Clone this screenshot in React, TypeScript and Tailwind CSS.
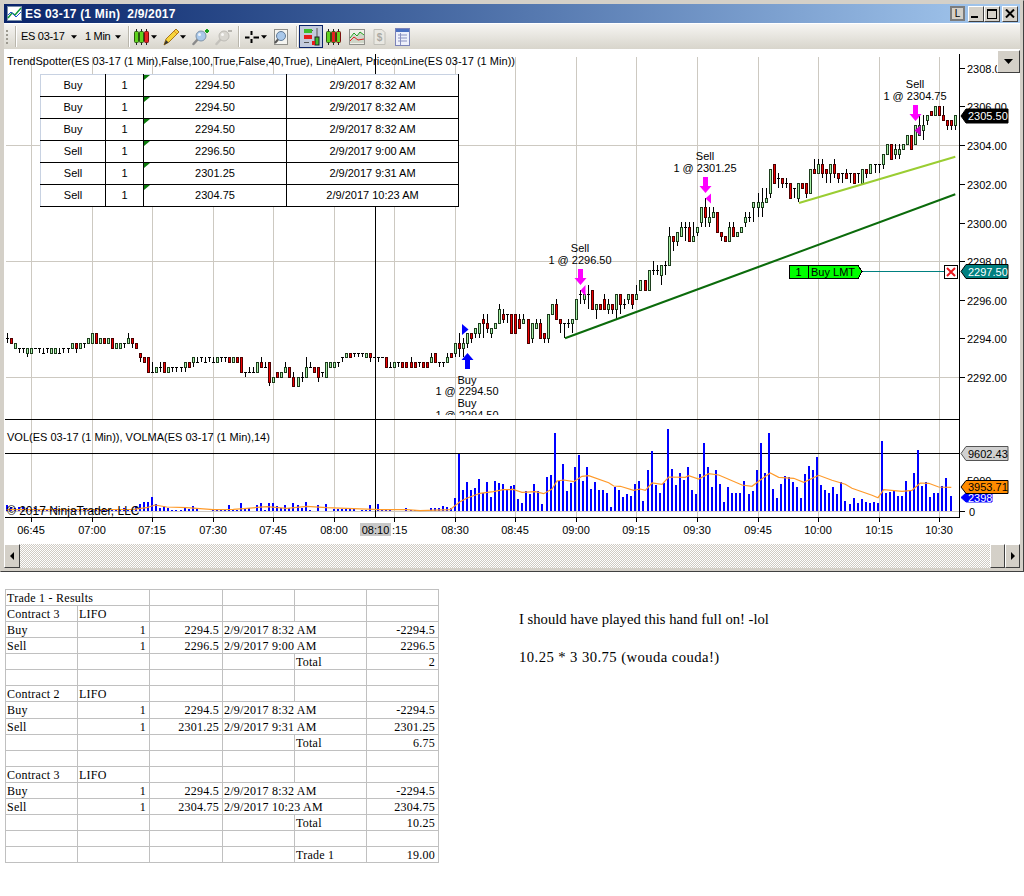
import React from "react";

const B: number[][] = [
[2,0,0,1,-1],[1,0,-1],[0,-1,-2],[2,-2,-2,-2,-3],[2,-2,-2,-2,-3],[0,-2,-3,-2,-4],[0,-2,-3],[2,-2,-2],[2,-2,-2,-2,-3],[2,-3,-3,-2],
[2,-2,-2,-2,-3],[0,-2,-3],[0,-2,-3],[2,-3,-3,-2],[2,-2,-2,-2,-3],[2,-2,-2,-2,-3],[0,-1,-2],[1,-1,-2,-1,-3],[0,-1,-2],[2,-1,-1,-1,-2],
[0,0,-1],[0,1,-1],[1,1,-1],[0,0,-1],[1,0,-1],[0,0,-1],[1,0,-2],[0,-1,-2],[0,-1,-2],[2,-1,-1,-1,-2],
[0,0,-1,1],[1,0,-1,0,-2],[1,-1,-2],[1,-3,-4,-3,-5],[1,-4,-5],[1,-4,-7],[2,-7,-7,-5],[0,-6,-7],[2,-6,-6,-5,-7],[1,-5,-7],
[0,-6,-7],[2,-6,-6,-6,-7],[2,-6,-6,-6,-7],[2,-6,-6,-6,-7],[0,-5,-6,-5,-7],[1,-5,-6],[0,-4,-5,-4,-6],[2,-5,-5,-4],[2,-4,-4,-4,-5],[2,-5,-5,-4],
[2,-4,-4,-4,-5],[2,-5,-5,-4],[0,-4,-5],[2,-4,-4,-4,-5],[2,-4,-4,-4,-5],[1,-4,-5],[0,-4,-5],[1,-4,-5],[1,-4,-7],[2,-7,-7,-7,-8],
[2,-7,-7,-6],[2,-7,-7,-6],[0,-5,-7],[1,-5,-6,-4],[2,-6,-6,-5],[1,-5,-9,-5,-10],[0,-8,-9],[1,-7,-8],[0,-7,-8],[0,-6,-7,-5],
[1,-6,-8],[1,-8,-10,-7],[0,-8,-10],[2,-8,-8,-7,-9],[0,-6,-8,-4],[2,-6,-6,-5],[1,-6,-7],[1,-6,-8,-6,-9],[2,-7,-7,-7,-8],[0,-5,-8],
[0,-5,-6],[0,-5,-6],[2,-5,-5,-5,-6],[2,-4,-4,-4,-5],[0,-3,-4],[1,-3,-4],[2,-3,-3,-3,-4],[2,-3,-3,-3,-4],[2,-3,-3,-3,-4],[0,-3,-4],
[1,-3,-4,-3,-5],[2,-4,-4],[2,-4,-4,-4,-5],[2,-4,-4],[1,-4,-6],[2,-6,-6,-5],[0,-5,-6],[2,-5,-5,-5,-6],[1,-5,-6],[1,-5,-6],
[1,-5,-6,-4],[1,-5,-6],[2,-5,-5,-5,-6],[1,-5,-6],[1,-5,-6],[0,-4,-5,-3],[1,-3,-5],[2,-5,-5,-5,-6],[2,-5,-5,-5,-6],[0,-4,-5,-3],
[1,-3,-4],[0,-1,-3,-1,-4],[1,-1,-2,1,-4],[0,-1,-2,0,-4],[0,1,-1,1,-2],[1,1,0,1,-1],[0,2,1,2,0],[0,3,1,3,0],[1,4,3,5,0],[1,3,2,5,1],
[0,2,1,2,0],[0,3,2],[0,6,3,7],[1,5,4,6,3],[2,5,5,5,3],[1,5,1],[1,5,1],[1,4,2,5],[0,4,3,5],[1,4,-1],
[0,3,0,3,-1],[0,3,2,4],[1,3,0,4],[1,1,0,1,-1],[0,5,0,5,-1],[0,7,5],[1,7,4,8],[1,4,3,4,1],[2,3,3,3,0],[2,3,3,4,2],
[0,4,3,4,1],[0,8,4],[2,9,9,10,7],[0,9,8,9,7],[2,9,9,11,6],[1,10,6],[0,7,6,7,4],[1,7,6],[1,8,6,9],[0,7,6,8,5],
[1,7,6,7,5],[0,9,6,9,4],[1,9,7,9,5],[2,7,7,8,6],[0,9,8,9,7],[1,9,7,9,6],[0,9,8,11],[0,12,10],[1,12,10],[0,14,10],
[2,14,14,16,13],[2,14,14,15,13],[0,15,13,15,11],[2,15,15,16,13],[0,21,15,23],[1,21,20,21,18],[0,22,20,22,19],[0,23,21,24],[2,23,23,24,20],[1,23,20,24],
[0,21,20,24],[0,23,22,23,21],[0,27,24,27,23],[1,27,25,29,23],[0,25,24,27,23],[0,26,25,27],[1,26,22],[1,22,21,22,20],[1,21,20],[0,23,20,24],
[1,23,21,24],[0,22,21],[0,23,22],[0,25,24,26,23],[2,25,25,26,24],[0,28,27,28,24],[0,28,27,30,25],[0,28,27,31,25],[0,29,28,31],[0,35,30,35,29],
[1,36,32],[2,33,33,34,31],[1,33,32,33,31],[2,32,32,33,31],[1,32,29],[2,31,31,31,29],[0,32,29,32,28],[1,32,31],[1,32,30,32,29],[0,35,30],
[1,35,34,37],[0,36,34,37],[1,36,34,37,33],[1,35,34,35,32],[0,36,34,36,32],[1,36,34,37,33],[1,34,33,34,32],[2,34,34,34,32],[1,34,33,35],[2,34,34,34,32],
[1,34,32],[2,34,34,34,32],[0,35,32],[1,35,34,35,33],[0,36,34],[2,36,36,36,34],[2,36,36,36,34],[0,38,36,38,35],[0,40,38],[1,40,37],
[0,39,38,40,37],[0,39,38,40,37],[0,40,39],[0,42,40],[1,42,39],[0,44,40],[0,44,42,46],[0,44,43,46,41],[0,46,45,46,44],[1,47,46],
[0,48,46],[1,48,46],[1,46,45,48],[1,45,44,45,43],[1,45,44,45,43],[0,46,44,46,43],
];

const LV = [6,4,3,4,4,3,2,3,2,2,2,2,3,2,2,1,1,2,2,3,2,2,3,2,3,2,1,2,1,3,2,2,5,7,9,9,14,7,3,5,3,1,1,1,3,2,5,3,0,0,0,1,1,1,1,6,1,1,8,3,3,0,6,8,1,8,8,5,3,6,3,8,6,3,9,1,0,6,0,7,0,2,2,2,2,2,2,0,1,1,6,0,7,2,1,1,0,0,0,3,1,1,0,0,0,3,3,3,5,4,3,13,57,21,29,21,23,32,18,29,14,30,28,27,21,25];
const RV = [210,252,264,228,236,207,228,266,186,180,54,198,147,228,204,156,120,198,156,222,201,225,225,234,276,216,225,246,237,243,207,198,258,165,108,210,234,204,42,162,210,174,195,156,225,237,177,84,156,216,165,207,261,216,234,234,234,198,237,228,165,84,174,54,222,249,207,183,186,201,216,249,177,153,165,126,210,225,234,216,237,201,258,267,249,264,252,261,264,261,264,78,234,231,228,243,243,198,228,174,105,213,201,246,234,234,213,189,243];

const MAL = [[20,284],[200,284],[400,283],[440,278],[465,270],[500,276],[560,278],[640,284],[700,283],[740,280],[800,275],[860,280],[920,274],[980,278],[1060,281],[1140,284],[1220,284],[1260,287],[1350,284],[1380,260],[1400,250],[1440,235],[1480,230],[1510,224],[1536,224]];
const MAR = [[0,222],[30,232],[70,230],[95,236],[120,222],[135,198],[155,195],[185,200],[210,184],[230,182],[290,203],[305,213],[325,214],[365,226],[385,222],[400,226],[420,204],[450,208],[470,186],[520,187],[530,182],[560,192],[590,176],[620,180],[690,210],[720,214],[745,195],[775,174],[800,187],[845,190],[875,202],[920,181],[960,196],[1000,208],[1020,220],[1080,241],[1098,248],[1115,224],[1170,229],[1200,226],[1225,204],[1250,205],[1280,216],[1318,217]];
const MA = MAL.map(([x, y]) => `${(x / 3).toFixed(1)},${(415 + y / 3).toFixed(1)}`).concat(MAR.map(([x, y]) => `${(512 + x / 3).toFixed(1)},${(415 + y / 3).toFixed(1)}`)).join(" ");

const px = (i: number) => Math.floor(7.5 + 4.035 * i);
const py = (t: number) => Math.round(338 - 4.84 * t);

const gridI = Array.from({ length: 16 }, (_, k) => 6 + 15 * k);
const times = ["06:45","07:00","07:15","07:30","07:45","08:00","","08:30","08:45","09:00","09:15","09:30","09:45","10:00","10:15","10:30"];
const prices: [string, number][] = [["2308.00",68],["2306.00",106],["2304.00",145],["2302.00",184],["2300.00",223],["2298.00",261],["2296.00",300],["2294.00",338],["2292.00",377]];
const GRID = "#cdc9c1";

function Arrow({ x, y, up, color }: { x: number; y: number; up?: boolean; color: string }) {
  const d = up
    ? `M${x},${y} l6,7 h-3.5 v9 h-5 v-9 h-3.5 z`
    : `M${x},${y + 16} l6,-7 h-3.5 v-9 h-5 v9 h-3.5 z`;
  return <path d={d} fill={color} />;
}

function Tag({ y, h = 14, x2 = 1008, fill, stroke = "#000", text, color = "#000" }: { y: number; h?: number; x2?: number; fill: string; stroke?: string; text: string; color?: string }) {
  const t = y - h / 2;
  return (
    <g>
      <polygon points={`961,${y} 966,${t} ${x2},${t} ${x2},${t + h} 966,${t + h}`} fill={fill} stroke={stroke} strokeWidth={1} />
      <text x={968} y={y + 4} fontSize={11} fill={color}>{text}</text>
    </g>
  );
}

function Chart() {
  return (
    <svg viewBox="4 49 1015 495" width={1015} height={495} className="block">
      <defs>
        <clipPath id="topclip"><rect x="4" y="49" width="955" height="366" /></clipPath>
      </defs>
      <g shapeRendering="crispEdges">
        {gridI.map((i) => (
          <g key={i}>
            <line x1={px(i) + 0.5} x2={px(i) + 0.5} y1={57} y2={517} stroke={GRID} />
            <line x1={px(i) + 0.5} x2={px(i) + 0.5} y1={517} y2={522} stroke="#000" />
          </g>
        ))}
        {[145, 261, 377].map((y) => <line key={y} x1={6} x2={959} y1={y + 0.5} y2={y + 0.5} stroke={GRID} />)}
        <line x1={6} x2={959} y1={511.5} y2={511.5} stroke={GRID} />
        <line x1={375.5} x2={375.5} y1={54} y2={517} stroke="#000" />
        <line x1={5} x2={959} y1={419.5} y2={419.5} stroke="#000" />
        <line x1={5} x2={959} y1={453.5} y2={453.5} stroke="#000" />
        <line x1={5} x2={959} y1={517.5} y2={517.5} stroke="#000" />
        <line x1={959.5} x2={959.5} y1={54} y2={518} stroke="#000" />
        {prices.map(([, y]) => <line key={y} x1={960} x2={965} y1={y + 0.5} y2={y + 0.5} stroke="#000" />)}
        <line x1={960} x2={965} y1={511.5} y2={511.5} stroke="#000" />

        {LV.map((h, i) => h > 0 && <rect key={i} x={px(i) - 1} y={511 - h} width={2} height={h} fill="#0000ff" />)}
        {RV.map((y, k) => <rect key={k} x={Math.floor(513.7 + 4.04 * k)} y={Math.round(415 + y / 3)} width={2} height={511 - Math.round(415 + y / 3)} fill="#0000ff" />)}

        {B.map(([c, top, bot, hi, lo], i) => {
          const x = px(i);
          const yT = py(top), yB = py(bot);
          const yH = py(hi === undefined ? top : hi), yL = py(lo === undefined ? bot : lo);
          return (
            <g key={i}>
              {(yH < yT || yL > yB) && <line x1={x + 0.5} x2={x + 0.5} y1={yH} y2={yL} stroke="#000" />}
              {c === 2
                ? <line x1={x - 1} x2={x + 2} y1={yT + 0.5} y2={yT + 0.5} stroke="#000" />
                : <rect x={x - 0.5} y={yT + 0.5} width={2} height={Math.max(yB - yT, 1)} fill={c === 0 ? "#a8f0a8" : "#f00000"} stroke={c === 0 ? "#1c3c1c" : "#4a0000"} />}
            </g>
          );
        })}
      </g>

      <polyline points={MA} fill="none" stroke="#ff9a2a" strokeWidth={1.2} />
      <line x1={565} y1={338.3} x2={955.3} y2={194.3} stroke="#0b6b0b" strokeWidth={2} />
      <line x1={799} y1={203} x2={955.3} y2={156.7} stroke="#9acd32" strokeWidth={2} />

      <g fontSize={11} fill="#000">
        <text x={7} y={65} textLength={508} lengthAdjust="spacing">TrendSpotter(ES 03-17 (1 Min),False,100,True,False,40,True), LineAlert, PriceonLine(ES 03-17 (1 Min))</text>
        <text x={7} y={441}>VOL(ES 03-17 (1 Min)), VOLMA(ES 03-17 (1 Min),14)</text>
        <text x={7} y={515} fontSize={12}>© 2017 NinjaTrader, LLC</text>

        {prices.map(([s, y]) => <text key={s} x={967} y={y + 5}>{s}</text>)}
        <text x={967} y={485}>5000</text>
        <text x={969} y={516}>0</text>
        {gridI.map((i, k) => times[k] && <text key={i} x={px(i)} y={534} textAnchor="middle">{times[k]}</text>)}
        <rect x={360} y={523} width={31} height={13} fill="#c8c8c8" />
        <text x={375.5} y={534} textAnchor="middle">08:10</text>
        <text x={392} y={534}>:15</text>

        <g textAnchor="middle">
          <text x={580} y={252}>Sell</text>
          <text x={580} y={264}>1 @ 2296.50</text>
          <text x={705} y={160}>Sell</text>
          <text x={705} y={172}>1 @ 2301.25</text>
          <text x={915} y={88}>Sell</text>
          <text x={915} y={100}>1 @ 2304.75</text>
          <g clipPath="url(#topclip)">
            <text x={467} y={384}>Buy</text>
            <text x={467} y={395}>1 @ 2294.50</text>
            <text x={467} y={407}>Buy</text>
            <text x={467} y={419}>1 @ 2294.50</text>
          </g>
        </g>
      </g>

      <Arrow x={580.5} y={269} color="#ff00ff" />
      <Arrow x={705.5} y={177} color="#ff00ff" />
      <Arrow x={915.5} y={105} color="#ff00ff" />
      <Arrow x={467.5} y={353} up color="#0000ff" />
      <polygon points="580.5,290.5 585.5,285 585.5,296" fill="#ff00ff" />
      <polygon points="705.5,198.5 711,193.5 711,203.5" fill="#ff00ff" />
      <polygon points="914.5,130.5 920.5,125.5 920.5,135.5" fill="#cc00cc" />
      <polygon points="468.5,329.5 462,324 462,335" fill="#0000ff" />

      <line x1={861} x2={945} y1={271.5} y2={271.5} stroke="#008080" shapeRendering="crispEdges" />
      <polygon points="789.5,265.5 858,265.5 862,271.5 858,278.5 789.5,278.5" fill="#00ff00" stroke="#000" shapeRendering="crispEdges" />
      <line x1={808.5} x2={808.5} y1={265} y2={279} stroke="#000" shapeRendering="crispEdges" />
      <text x={798.5} y={276} fontSize={11} textAnchor="middle" fill="#000">1</text>
      <text x={811} y={276} fontSize={11} fill="#000">Buy LMT</text>
      <rect x={944.5} y={265.5} width={13} height={13} fill="#fff" stroke="#000" shapeRendering="crispEdges" />
      <path d="M947,268 L955,276 M955,268 L947,276" stroke="#e8141c" strokeWidth={2} />

      <Tag y={116} fill="#000" text="2305.50" color="#fff" />
      <Tag y={271.5} fill="#008080" text="2297.50" color="#fff" />
      <Tag y={453.5} fill="#d0d0d0" stroke="#555" text="9602.43" />
      <Tag y={497.5} h={9} x2={992} fill="#0000ff" stroke="#0000ff" text="2398" color="#fff" />
      <Tag y={487} h={13} fill="#ff8c00" text="3953.71" />
    </svg>
  );
}

const Caret = () => (
  <svg width="6" height="4" viewBox="0 0 7 4" className="block shrink-0"><path d="M0,0 H7 L3.5,4 Z" fill="#000" /></svg>
);
const Sep = () => <div className="h-[21px] w-[2px] shrink-0 bg-[#b9b6ac] border-r border-white" />;

function TIcon({ w = 16, children }: { w?: number; children: React.ReactNode }) {
  return <svg width={w} height="18" viewBox={`0 0 ${w} 18`} className="block shrink-0">{children}</svg>;
}

function Candles({ a = "#5fd31e", b = "#5fd31e", c = "#e62222" }: { a?: string; b?: string; c?: string }) {
  return (
    <>
      <path d="M2.5,1 V17 M7.5,1 V17 M12.5,1 V17" stroke="#222" />
      <rect x="0.5" y="3.5" width="4" height="11" rx="1" fill={a} stroke="#2c5a10" />
      <rect x="5.5" y="3.5" width="4" height="11" rx="1" fill={b} stroke="#2c5a10" />
      <rect x="10.5" y="3.5" width="4" height="11" rx="1" fill={c} stroke="#7a1010" />
    </>
  );
}

function Lens({ color = "#a9c8ea", handle = "#8a8a8a", rim = "#7f93a8" }: { color?: string; handle?: string; rim?: string }) {
  return (
    <>
      <path d="M6,11 L1.5,16" stroke={handle} strokeWidth="2.5" strokeLinecap="round" />
      <circle cx="9" cy="8" r="5" fill={color} stroke={rim} />
      <circle cx="7.5" cy="6.5" r="1.5" fill="#fff" opacity=".8" />
    </>
  );
}

function Toolbar() {
  return (
    <div className="flex h-[26px] items-center bg-gradient-to-b from-[#f6f5f2] to-[#d8d5cc] border-t border-[#ffffff] text-[11px] tracking-[-0.3px] text-black">
      <div className="ml-[2px] flex w-[2px] flex-col gap-[2px]">
        {[0, 1, 2, 3].map((k) => <div key={k} className="h-[2px] w-[2px] bg-[#9c998f]" />)}
      </div>
      <div className="ml-[7px]"><Sep /></div>
      <span className="ml-[4px] w-[50px] whitespace-nowrap">ES 03-17</span>
      <Caret />
      <span className="ml-[8px] w-[30px] whitespace-nowrap">1 Min</span>
      <Caret />
      <div className="ml-[7px]"><Sep /></div>
      <div className="ml-[4px]"><TIcon w={15}><Candles /></TIcon></div>
      <div className="ml-[2px]"><Caret /></div>
      <div className="ml-[6px]">
        <TIcon>
          <path d="M1,17 L3,11 L13,1 L16,4 L6,14 Z" fill="#f7d53c" stroke="#a8761a" strokeWidth="1" />
          <path d="M1,17 L3,12 L5.5,14.5 Z" fill="#333" />
          <path d="M11,3 L14,6" stroke="#e9902a" />
        </TIcon>
      </div>
      <div className="ml-[1px]"><Caret /></div>
      <div className="ml-[6px]">
        <TIcon w={17}><Lens /><path d="M13,3 H17 M15,1 V5" stroke="#16a01e" strokeWidth="2" /></TIcon>
      </div>
      <div className="ml-[6px]">
        <TIcon w={17}><Lens color="#d8d6d0" handle="#c4c2bc" rim="#bdbbb5" /><path d="M13,3 H17" stroke="#b8b6b0" strokeWidth="2" /></TIcon>
      </div>
      <div className="ml-[6px]"><Sep /></div>
      <div className="ml-[4px]">
        <TIcon>
          <path d="M7.5,3 V7 M7.5,11 V15 M1,9.5 H5.5 M9.5,9.5 H15" stroke="#000" strokeWidth="2" />
        </TIcon>
      </div>
      <div className="ml-[1px]"><Caret /></div>
      <div className="ml-[6px]">
        <TIcon>
          <rect x="1.5" y="1.5" width="13" height="15" fill="#f4f4f0" stroke="#8f8f8a" />
          <circle cx="8" cy="8" r="4.5" fill="#a9c8ea" stroke="#607a96" />
          <path d="M5,11.5 L2,15" stroke="#555" strokeWidth="2" />
        </TIcon>
      </div>
      <div className="ml-[7px]"><Sep /></div>
      <div className="ml-[1px] flex h-[23px] w-[24px] items-center justify-center border border-[#0a246a] bg-[#c3cbdc]">
        <svg width="17" height="19" viewBox="0 0 17 19" className="block">
          <path d="M1,3.5 H10 M1,9.5 H8 M1,15.5 H6 M14,1 V18" stroke="#555" />
          <rect x="1" y="2" width="8" height="4" fill="#3dbb2c" />
          <rect x="1" y="8" width="8" height="4" fill="#e61c1c" />
          <rect x="12" y="10" width="4" height="8" fill="#3dbb2c" stroke="#222" />
          <rect x="9" y="14" width="3" height="4" fill="#e61c1c" />
        </svg>
      </div>
      <div className="ml-[3px]"><TIcon w={15}><Candles b="#e62222" c="#5fd31e" /></TIcon></div>
      <div className="ml-[8px]">
        <TIcon>
          <rect x="0.5" y="1.5" width="15" height="15" fill="#f0efe9" stroke="#8f8f8a" />
          <path d="M1,15 V11 L5,6 L8,9 L11,4 L15,8 V15 Z" fill="#cfd6c8" />
          <path d="M1,10 L5,5 L8,8 L11,4 L15,7" fill="none" stroke="#1ea01e" />
          <path d="M1,13 L5,9 L9,12 L15,11" fill="none" stroke="#e02020" />
        </TIcon>
      </div>
      <div className="ml-[8px]">
        <TIcon w={13}>
          <path d="M1,1.5 H9 L12,4.5 V16.5 H1 Z" fill="#e9e8e2" stroke="#c0bfb8" />
          <text x="6.5" y="13" fontSize="10" fontWeight="bold" textAnchor="middle" fill="#aaa9a2">$</text>
        </TIcon>
      </div>
      <div className="ml-[9px]">
        <TIcon w={15}>
          <rect x="0.5" y="0.5" width="14" height="17" fill="#eef0fb" stroke="#7b83b8" />
          <rect x="1" y="1" width="13" height="3" fill="#4a6fc0" />
          <path d="M3,7 H12 M3,10 H12 M3,13 H12" stroke="#8890c0" />
          <path d="M5.5,5 V17" stroke="#8890c0" />
        </TIcon>
      </div>
    </div>
  );
}

function WinBtn({ children }: { children: React.ReactNode }) {
  return (
    <div className="flex h-[16px] w-[16px] items-center justify-center border border-[#404040] border-t-white border-l-white bg-[#d4d0c8]">
      {children}
    </div>
  );
}

function TitleBar() {
  return (
    <div className="flex h-[19px] items-center bg-gradient-to-r from-[#0a246a] to-[#a6caf0] pl-[3px] pr-[2px]">
      <svg width="15" height="15" viewBox="0 0 15 15" className="block shrink-0">
        <rect x="0.5" y="0.5" width="14" height="14" fill="#fff" stroke="#7a8fa8" />
        <path d="M1,12 L5,7 L8,9 L14,2" fill="none" stroke="#0f9a3a" strokeWidth="1.5" />
        <path d="M1,9 L4,6 L9,11 L14,6" fill="none" stroke="#2050d0" />
      </svg>
      <span className="ml-[3px] whitespace-pre text-[12px] font-bold text-white tracking-[0.2px]">ES 03-17 (1 Min)  2/9/2017</span>
      <div className="ml-auto flex items-center">
        <div className="mr-[3px] flex h-[15px] w-[15px] items-center justify-center border-2 border-[#7c7c7c] bg-[#d4d0c8] text-[10px] leading-none text-black">L</div>
        <WinBtn><div className="mt-[7px] mr-[4px] h-[2px] w-[7px] bg-black" /></WinBtn>
        <WinBtn><div className="h-[10px] w-[10px] border border-t-2 border-black" /></WinBtn>
        <div className="ml-[2px]">
          <WinBtn>
            <svg width="10" height="9" viewBox="0 0 10 9" className="block"><path d="M1,0.5 L9,8.5 M9,0.5 L1,8.5" stroke="#000" strokeWidth="2" /></svg>
          </WinBtn>
        </div>
      </div>
    </div>
  );
}

const RAISED = "flex items-center justify-center border border-[#404040] border-t-white border-l-white bg-[#d4d0c8]";

function ScrollBar() {
  return (
    <div className="flex h-[24px] bg-[repeating-conic-gradient(#cfcbc3_0_25%,#ffffff_0_50%)] bg-[length:2px_2px]">
      <div className={`w-[16px] ${RAISED}`}>
        <svg width="4" height="8" viewBox="0 0 4 8" className="block"><path d="M4,0 V8 L0,4 Z" fill="#000" /></svg>
      </div>
      <div className={`ml-auto w-[15px] ${RAISED}`} />
      <div className={`w-[15px] ${RAISED}`}>
        <svg width="4" height="8" viewBox="0 0 4 8" className="block"><path d="M0,0 V8 L4,4 Z" fill="#000" /></svg>
      </div>
    </div>
  );
}

const trades = [
  ["Buy", "2294.50", "2/9/2017 8:32 AM"],
  ["Buy", "2294.50", "2/9/2017 8:32 AM"],
  ["Buy", "2294.50", "2/9/2017 8:32 AM"],
  ["Sell", "2296.50", "2/9/2017 9:00 AM"],
  ["Sell", "2301.25", "2/9/2017 9:31 AM"],
  ["Sell", "2304.75", "2/9/2017 10:23 AM"],
];

function TradeTable() {
  return (
    <table className="absolute left-[36px] top-[25px] w-[418px] table-fixed border-collapse bg-white text-center text-[11px] text-black">
      <colgroup>
        <col className="w-[65px]" /><col className="w-[38px]" /><col className="w-[143px]" /><col className="w-[172px]" />
      </colgroup>
      <tbody>
        {trades.map((r, k) => (
          <tr key={k} className="h-[22px]">
            <td className={`border border-black border-l-[#c8d2e2] p-0 ${k === 0 ? "border-t-[#c8d2e2]" : ""}`}>{r[0]}</td>
            <td className={`border border-black p-0 ${k === 0 ? "border-t-[#c8d2e2]" : ""}`}>1</td>
            <td className={`relative border border-black p-0 ${k === 0 ? "border-t-[#c8d2e2]" : ""}`}>
              <div className="absolute left-0 top-0 h-0 w-0 border-r-[6px] border-t-[5px] border-r-transparent border-t-[#0a7a0a]" />
              {r[1]}
            </td>
            <td className={`border border-black p-0 ${k === 0 ? "border-t-[#c8d2e2]" : ""}`}>{r[2]}</td>
          </tr>
        ))}
      </tbody>
    </table>
  );
}

const C = "border border-[#c0c0c0] p-0 pl-[1px] align-middle whitespace-nowrap leading-[14px]";
const R = "border border-[#c0c0c0] p-0 pr-[3px] text-right align-middle whitespace-nowrap leading-[14px]";

function Empty({ h = "h-[16px]" }: { h?: string }) {
  return <tr className={h}><td className={C} /><td className={C} /><td className={C} /><td className={C} /><td className={C} /><td className={C} /></tr>;
}
function Contract({ n }: { n: string }) {
  return <tr className="h-[16px]"><td className={C}>{`Contract ${n}`}</td><td className={C}>LIFO</td><td className={C} /><td className={C} /><td className={C} /><td className={C} /></tr>;
}
function Fill({ side, price, date, val, h = "h-[16px]" }: { side: string; price: string; date: string; val: string; h?: string }) {
  return <tr className={h}><td className={C}>{side}</td><td className={R}>1</td><td className={R}>{price}</td><td className={C} colSpan={2}>{date}</td><td className={R}>{val}</td></tr>;
}
function Total({ label, val }: { label: string; val: string }) {
  return <tr className="h-[16px]"><td className={C} /><td className={C} /><td className={C} /><td className={C} /><td className={C}>{label}</td><td className={R}>{val}</td></tr>;
}

function Sheet() {
  return (
    <table className="w-[433px] table-fixed border-collapse font-['Liberation_Serif',serif] text-[12px] tracking-[0.25px] text-black">
      <colgroup>
        <col className="w-[72px]" /><col className="w-[72px]" /><col className="w-[73px]" /><col className="w-[72px]" /><col className="w-[72px]" /><col className="w-[72px]" />
      </colgroup>
      <tbody>
        <tr className="h-[16px]"><td className={C} colSpan={2}>Trade 1 - Results</td><td className={C} /><td className={C} /><td className={C} /><td className={C} /></tr>
        <Contract n="3" />
        <Fill side="Buy" price="2294.5" date="2/9/2017 8:32 AM" val="-2294.5" />
        <Fill side="Sell" price="2296.5" date="2/9/2017 9:00 AM" val="2296.5" />
        <Total label="Total" val="2" />
        <Empty />
        <Contract n="2" />
        <Fill side="Buy" price="2294.5" date="2/9/2017 8:32 AM" val="-2294.5" h="h-[17px]" />
        <Fill side="Sell" price="2301.25" date="2/9/2017 9:31 AM" val="2301.25" />
        <Total label="Total" val="6.75" />
        <Empty />
        <Contract n="3" />
        <Fill side="Buy" price="2294.5" date="2/9/2017 8:32 AM" val="-2294.5" />
        <Fill side="Sell" price="2304.75" date="2/9/2017 10:23 AM" val="2304.75" />
        <Total label="Total" val="10.25" />
        <Empty />
        <Total label="Trade 1" val="19.00" />
      </tbody>
    </table>
  );
}

export default function App() {
  return (
    <div className="h-[896px] w-[1024px] overflow-hidden bg-white font-['Liberation_Sans',Arial,sans-serif] text-black">
      <div className="h-[572px] border border-[#d4d0c8] border-r-[#404040] border-b-[#404040] bg-[#d4d0c8] pb-[3px] pl-[3px] pr-[3px] pt-[3px]">
        <TitleBar />
        <Toolbar />
        <div className="relative h-[495px] bg-white">
          <Chart />
          <TradeTable />
          <div className={`absolute right-0 top-[1px] h-[23px] w-[23px] ${RAISED}`}>
            <svg width="9" height="5" viewBox="0 0 9 5" className="block"><path d="M0,0 H9 L4.5,5 Z" fill="#000" /></svg>
          </div>
        </div>
        <ScrollBar />
      </div>
      <div className="mt-[17px] flex pl-[5px]">
        <Sheet />
        <div className="ml-[80px] pt-[21px] font-['Liberation_Serif',serif] text-[14.67px] leading-[19px] text-black">
          <p>I should have played this hand full on! -lol</p>
          <p className="mt-[19px] tracking-[0.43px]">10.25 * 3 30.75 (wouda couda!)</p>
        </div>
      </div>
    </div>
  );
}
